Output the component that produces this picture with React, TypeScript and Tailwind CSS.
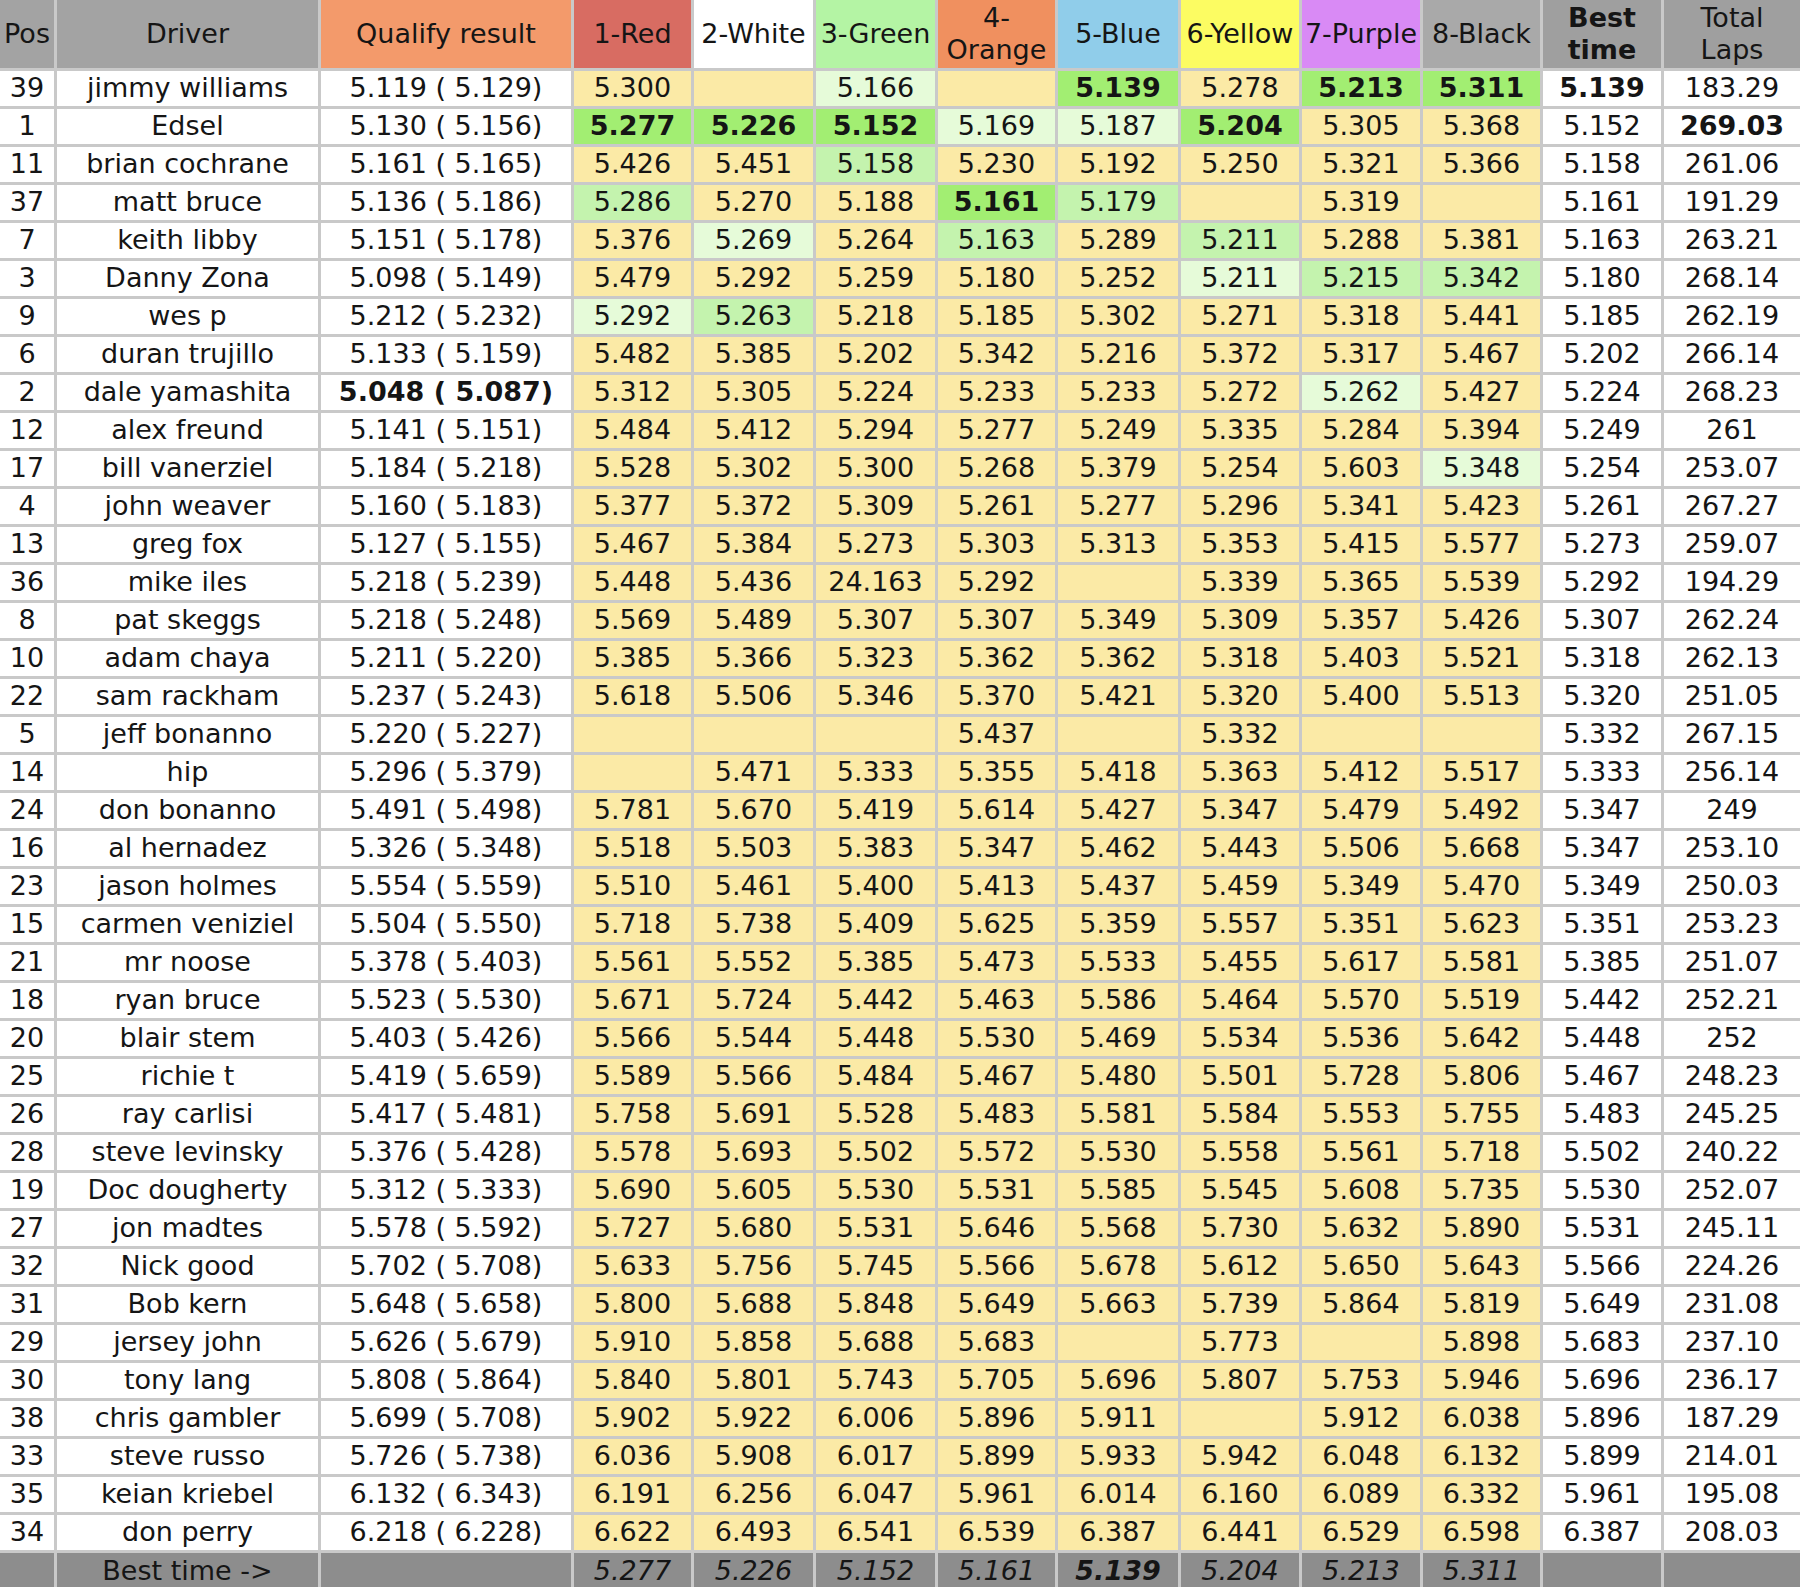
const heads = [
  { label: 'Pos', bg: 'bg-[#a3a3a3]' },
  { label: 'Driver', bg: 'bg-[#a3a3a3]' },
  { label: 'Qualify result', bg: 'bg-[#f39a6b]' },
  { label: '1-Red', bg: 'bg-[#d86c62]' },
  { label: '2-White', bg: 'bg-white' },
  { label: '3-Green', bg: 'bg-[#b4f4a4]' },
  { label: '4-\nOrange', bg: 'bg-[#f0905f]' },
  { label: '5-Blue', bg: 'bg-[#90cdea]' },
  { label: '6-Yellow', bg: 'bg-[#fcfc62]' },
  { label: '7-Purple', bg: 'bg-[#d98af5]' },
  { label: '8-Black', bg: 'bg-[#a9a9a9]' },
  { label: 'Best\ntime', bg: 'bg-[#9f9f9f]', bold: true },
  { label: 'Total\nLaps', bg: 'bg-[#9f9f9f]' },
]

// heat cells: prefix b = best (bold bright green), l = light green, p = pale green
const rows: [string, string, string, string, string, string][] = [
  ['39', 'jimmy williams', '5.119 ( 5.129)', '5.300,,p5.166,,b5.139,5.278,b5.213,b5.311', '*5.139', '183.29'],
  ['1', 'Edsel', '5.130 ( 5.156)', 'b5.277,b5.226,b5.152,p5.169,p5.187,b5.204,5.305,5.368', '5.152', '*269.03'],
  ['11', 'brian cochrane', '5.161 ( 5.165)', '5.426,5.451,l5.158,5.230,5.192,5.250,5.321,5.366', '5.158', '261.06'],
  ['37', 'matt bruce', '5.136 ( 5.186)', 'l5.286,5.270,5.188,b5.161,l5.179,,5.319,', '5.161', '191.29'],
  ['7', 'keith libby', '5.151 ( 5.178)', '5.376,p5.269,5.264,l5.163,5.289,l5.211,5.288,5.381', '5.163', '263.21'],
  ['3', 'Danny Zona', '5.098 ( 5.149)', '5.479,5.292,5.259,5.180,5.252,p5.211,l5.215,l5.342', '5.180', '268.14'],
  ['9', 'wes p', '5.212 ( 5.232)', 'p5.292,l5.263,5.218,5.185,5.302,5.271,5.318,5.441', '5.185', '262.19'],
  ['6', 'duran trujillo', '5.133 ( 5.159)', '5.482,5.385,5.202,5.342,5.216,5.372,5.317,5.467', '5.202', '266.14'],
  ['2', 'dale yamashita', '*5.048 ( 5.087)', '5.312,5.305,5.224,5.233,5.233,5.272,p5.262,5.427', '5.224', '268.23'],
  ['12', 'alex freund', '5.141 ( 5.151)', '5.484,5.412,5.294,5.277,5.249,5.335,5.284,5.394', '5.249', '261'],
  ['17', 'bill vanerziel', '5.184 ( 5.218)', '5.528,5.302,5.300,5.268,5.379,5.254,5.603,p5.348', '5.254', '253.07'],
  ['4', 'john weaver', '5.160 ( 5.183)', '5.377,5.372,5.309,5.261,5.277,5.296,5.341,5.423', '5.261', '267.27'],
  ['13', 'greg fox', '5.127 ( 5.155)', '5.467,5.384,5.273,5.303,5.313,5.353,5.415,5.577', '5.273', '259.07'],
  ['36', 'mike iles', '5.218 ( 5.239)', '5.448,5.436,24.163,5.292,,5.339,5.365,5.539', '5.292', '194.29'],
  ['8', 'pat skeggs', '5.218 ( 5.248)', '5.569,5.489,5.307,5.307,5.349,5.309,5.357,5.426', '5.307', '262.24'],
  ['10', 'adam chaya', '5.211 ( 5.220)', '5.385,5.366,5.323,5.362,5.362,5.318,5.403,5.521', '5.318', '262.13'],
  ['22', 'sam rackham', '5.237 ( 5.243)', '5.618,5.506,5.346,5.370,5.421,5.320,5.400,5.513', '5.320', '251.05'],
  ['5', 'jeff bonanno', '5.220 ( 5.227)', ',,,5.437,,5.332,,', '5.332', '267.15'],
  ['14', 'hip', '5.296 ( 5.379)', ',5.471,5.333,5.355,5.418,5.363,5.412,5.517', '5.333', '256.14'],
  ['24', 'don bonanno', '5.491 ( 5.498)', '5.781,5.670,5.419,5.614,5.427,5.347,5.479,5.492', '5.347', '249'],
  ['16', 'al hernadez', '5.326 ( 5.348)', '5.518,5.503,5.383,5.347,5.462,5.443,5.506,5.668', '5.347', '253.10'],
  ['23', 'jason holmes', '5.554 ( 5.559)', '5.510,5.461,5.400,5.413,5.437,5.459,5.349,5.470', '5.349', '250.03'],
  ['15', 'carmen veniziel', '5.504 ( 5.550)', '5.718,5.738,5.409,5.625,5.359,5.557,5.351,5.623', '5.351', '253.23'],
  ['21', 'mr noose', '5.378 ( 5.403)', '5.561,5.552,5.385,5.473,5.533,5.455,5.617,5.581', '5.385', '251.07'],
  ['18', 'ryan bruce', '5.523 ( 5.530)', '5.671,5.724,5.442,5.463,5.586,5.464,5.570,5.519', '5.442', '252.21'],
  ['20', 'blair stem', '5.403 ( 5.426)', '5.566,5.544,5.448,5.530,5.469,5.534,5.536,5.642', '5.448', '252'],
  ['25', 'richie t', '5.419 ( 5.659)', '5.589,5.566,5.484,5.467,5.480,5.501,5.728,5.806', '5.467', '248.23'],
  ['26', 'ray carlisi', '5.417 ( 5.481)', '5.758,5.691,5.528,5.483,5.581,5.584,5.553,5.755', '5.483', '245.25'],
  ['28', 'steve levinsky', '5.376 ( 5.428)', '5.578,5.693,5.502,5.572,5.530,5.558,5.561,5.718', '5.502', '240.22'],
  ['19', 'Doc dougherty', '5.312 ( 5.333)', '5.690,5.605,5.530,5.531,5.585,5.545,5.608,5.735', '5.530', '252.07'],
  ['27', 'jon madtes', '5.578 ( 5.592)', '5.727,5.680,5.531,5.646,5.568,5.730,5.632,5.890', '5.531', '245.11'],
  ['32', 'Nick good', '5.702 ( 5.708)', '5.633,5.756,5.745,5.566,5.678,5.612,5.650,5.643', '5.566', '224.26'],
  ['31', 'Bob kern', '5.648 ( 5.658)', '5.800,5.688,5.848,5.649,5.663,5.739,5.864,5.819', '5.649', '231.08'],
  ['29', 'jersey john', '5.626 ( 5.679)', '5.910,5.858,5.688,5.683,,5.773,,5.898', '5.683', '237.10'],
  ['30', 'tony lang', '5.808 ( 5.864)', '5.840,5.801,5.743,5.705,5.696,5.807,5.753,5.946', '5.696', '236.17'],
  ['38', 'chris gambler', '5.699 ( 5.708)', '5.902,5.922,6.006,5.896,5.911,,5.912,6.038', '5.896', '187.29'],
  ['33', 'steve russo', '5.726 ( 5.738)', '6.036,5.908,6.017,5.899,5.933,5.942,6.048,6.132', '5.899', '214.01'],
  ['35', 'keian kriebel', '6.132 ( 6.343)', '6.191,6.256,6.047,5.961,6.014,6.160,6.089,6.332', '5.961', '195.08'],
  ['34', 'don perry', '6.218 ( 6.228)', '6.622,6.493,6.541,6.539,6.387,6.441,6.529,6.598', '6.387', '208.03'],
]

const footer = ['5.277', '5.226', '5.152', '5.161', '*5.139', '5.204', '5.213', '5.311']

const heat: Record<string, string> = {
  b: 'bg-[#a2ee72] font-bold',
  l: 'bg-[#c4f3ae]',
  p: 'bg-[#e6fbd9]',
}

function Plain({ v }: { v: string }) {
  const bold = v.startsWith('*')
  return (
    <div className={`flex items-center justify-center bg-white whitespace-pre ${bold ? 'font-bold' : ''}`}>
      {bold ? v.slice(1) : v}
    </div>
  )
}

function Heat({ v }: { v: string }) {
  const k = v[0]
  const cls = heat[k]
  return (
    <div className={`flex items-center justify-center ${cls ?? 'bg-[#fbeaa6]'}`}>
      {cls ? v.slice(1) : v}
    </div>
  )
}

export default function App() {
  return (
    <div
      className="w-[1800px] h-[1587px] overflow-hidden bg-[#c9c9c9] text-[27px] text-[#151515]"
      style={{ fontFamily: '"DejaVu Sans", Verdana, sans-serif' }}
    >
      <div className="grid grid-cols-[54px_261px_250px_117px_119px_119px_117px_120px_118px_118px_117px_118px_1fr] grid-rows-[68px_repeat(39,35px)_40px] gap-[3px]">
        {/* header */}
        {heads.map((h) => (
          <div
            key={h.label}
            className={`flex items-center justify-center text-center leading-[32px] whitespace-pre ${h.bg} ${h.bold ? 'font-bold' : ''}`}
          >
            {h.label}
          </div>
        ))}

        {rows.map(([pos, name, q, cells, best, total]) => (
          <div key={pos} className="contents">
            <Plain v={pos} />
            <Plain v={name} />
            <Plain v={q} />
            {cells.split(',').map((c, i) => (
              <Heat key={i} v={c} />
            ))}
            <Plain v={best} />
            <Plain v={total} />
          </div>
        ))}

        {/* best time row */}
        <div className="bg-[#8d8d8d]" />
        <div className="bg-[#8d8d8d] flex items-center justify-center pb-[4px]">Best time -&gt;</div>
        <div className="bg-[#8d8d8d]" />
        {footer.map((f, i) => (
          <div
            key={i}
            className={`bg-[#8d8d8d] flex items-center justify-center pb-[4px] italic ${f.startsWith('*') ? 'font-bold' : ''}`}
          >
            {f.replace('*', '')}
          </div>
        ))}
        <div className="bg-[#8d8d8d]" />
        <div className="bg-[#8d8d8d]" />
      </div>
    </div>
  )
}
